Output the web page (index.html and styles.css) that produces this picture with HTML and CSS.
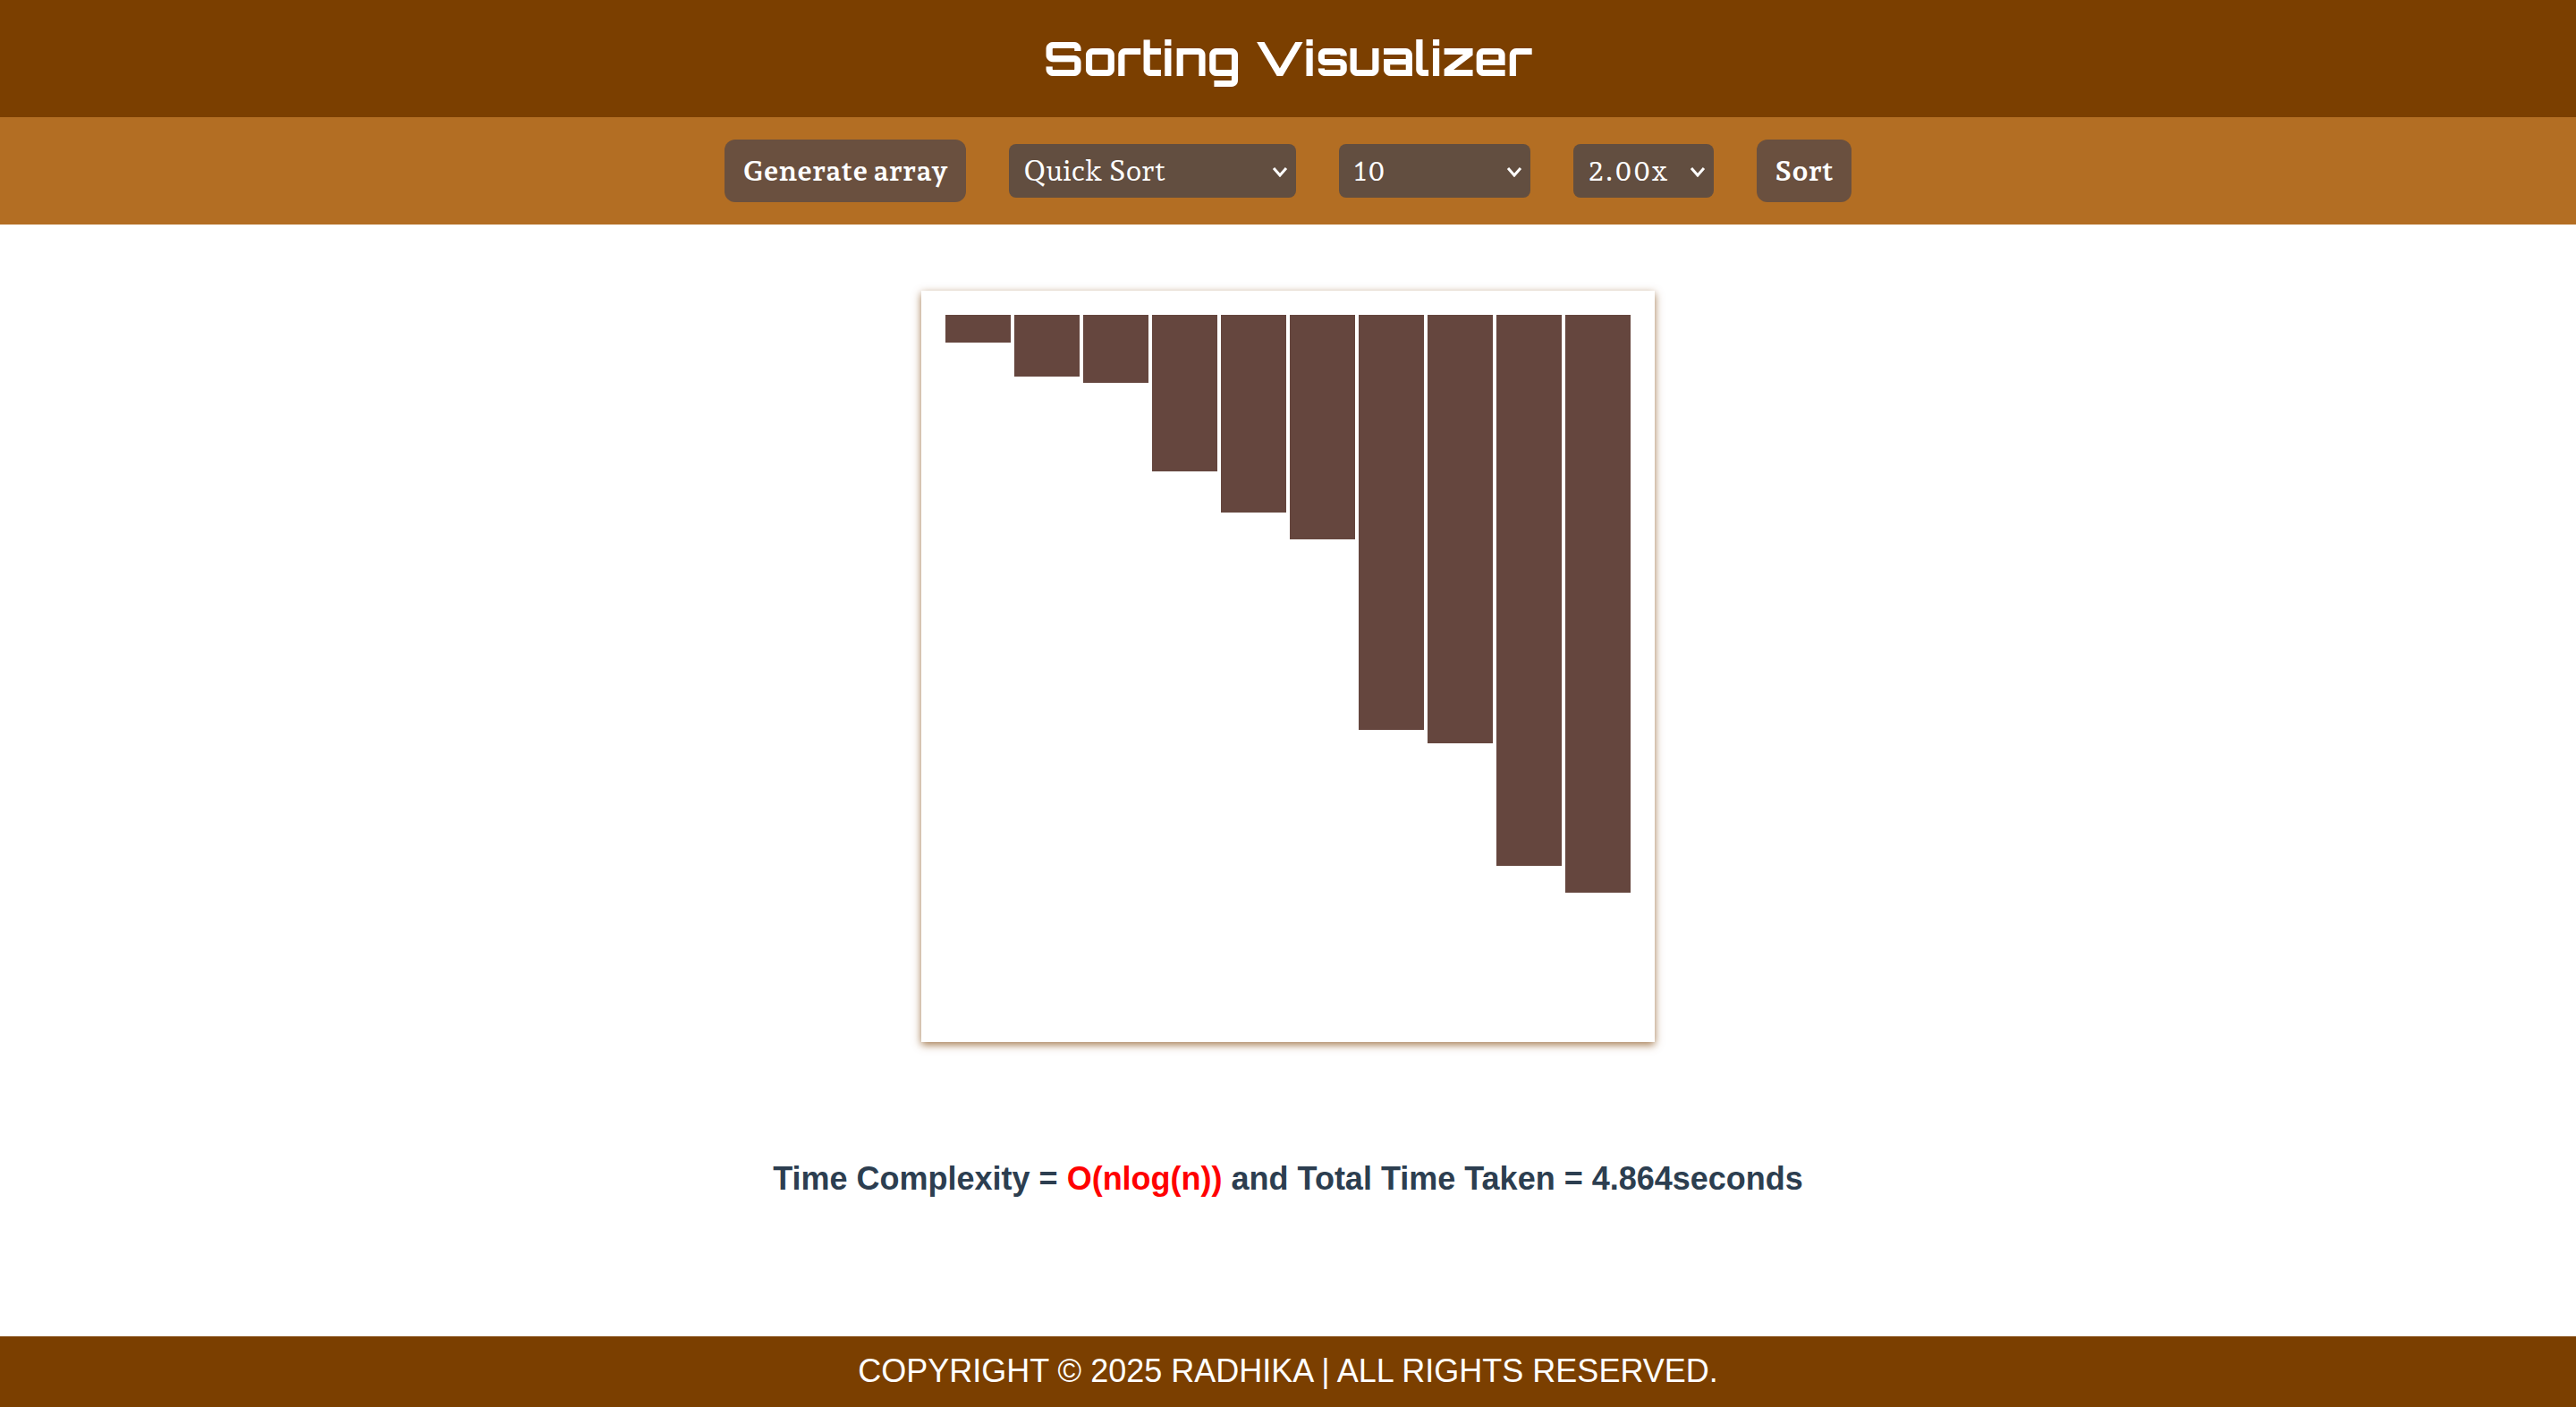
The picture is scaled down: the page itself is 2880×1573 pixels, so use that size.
FILE: index.html
```html
<!DOCTYPE html>
<html lang="en">
<head>
<meta charset="utf-8">
<meta name="viewport" content="width=device-width, initial-scale=1">
<title>Sorting Visualizer</title>
<link rel="stylesheet" href="styles.css">
</head>
<body>
<header class="header"><h1 class="title">Sorting Visualizer</h1></header>
<nav class="controls">
  <button class="button" type="button">Generate array</button>
  <div class="picker picker-algo">
    <select class="select" aria-label="Algorithm"><option>Quick Sort</option></select>
    <svg class="chevron" viewBox="0 0 18 12" aria-hidden="true"><path d="M2 2l7 8 7-8"/></svg>
  </div>
  <div class="picker picker-size">
    <select class="select" aria-label="Array size"><option>10</option></select>
    <svg class="chevron" viewBox="0 0 18 12" aria-hidden="true"><path d="M2 2l7 8 7-8"/></svg>
  </div>
  <div class="picker picker-speed">
    <select class="select" aria-label="Speed"><option>2.00x</option></select>
    <svg class="chevron" viewBox="0 0 18 12" aria-hidden="true"><path d="M2 2l7 8 7-8"/></svg>
  </div>
  <button class="button" type="button">Sort</button>
</nav>
<main class="main">
  <div class="array">
    <div class="bar" style="height:31px"></div>
    <div class="bar" style="height:69px"></div>
    <div class="bar" style="height:76px"></div>
    <div class="bar" style="height:175px"></div>
    <div class="bar" style="height:221px"></div>
    <div class="bar" style="height:251px"></div>
    <div class="bar" style="height:464px"></div>
    <div class="bar" style="height:479px"></div>
    <div class="bar" style="height:616px"></div>
    <div class="bar" style="height:646px"></div>
  </div>
  <p class="result">Time Complexity = <span class="complexity">O(nlog(n))</span> and Total Time Taken = 4.864seconds</p>
</main>
<footer class="footer">COPYRIGHT © 2025 RADHIKA | ALL RIGHTS RESERVED.</footer>
</body>
</html>
```
FILE: styles.css
```css
* { box-sizing: border-box; }

body {
  margin: 0;
  min-height: 100vh;
  display: flex;
  flex-direction: column;
  background: #fff;
  font-family: "Liberation Sans", Arial, sans-serif;
  font-size: 36px;
  line-height: 40px;
}

.header {
  padding: 32px 24px 35px;
  background: #7b3f00;
  color: #fff;
  text-align: center;
}

.title {
  margin: 0;
  font-family: Orbitron, "DejaVu Sans", sans-serif;
  font-size: 54px;
  font-weight: 700;
  line-height: 64px;
}

.controls {
  display: flex;
  flex-wrap: wrap;
  align-items: center;
  justify-content: center;
  gap: 24px 48px;
  padding: 25px;
  background: #b36e23;
}

.button,
.select {
  border: 0;
  color: #fff;
  font-family: "Andada Pro", "Liberation Serif", serif;
  font-size: 32px;
  line-height: 40px;
}

.button {
  padding: 15px 20px;
  border-radius: 12px;
  background: #6a503f;
  font-weight: 700;
}

.picker { position: relative; }
.picker-algo { width: 321px; }
.picker-size { width: 214px; }
.picker-speed { width: 157px; }

.select {
  display: block;
  width: 100%;
  height: 60px;
  padding: 0 40px 0 16px;
  border-radius: 8px;
  background: #624e40;
  appearance: none;
}

.chevron {
  position: absolute;
  top: 25px;
  right: 9px;
  width: 18px;
  height: 12px;
  fill: none;
  stroke: #fff;
  stroke-width: 3;
  pointer-events: none;
}

.main {
  flex: 1;
  display: flex;
  flex-direction: column;
  align-items: center;
  padding: 74px 24px;
}

.array {
  display: flex;
  align-items: flex-start;
  gap: 4px;
  min-height: 840px;
  padding: 27px;
  box-shadow: 0 3px 9px rgba(123, 63, 0, 0.7);
}

.bar {
  width: 73px;
  background: #65463e;
}

.result {
  margin: 133px 0 0;
  color: #2c3e50;
  font-weight: 700;
  text-align: center;
}

.complexity { color: #f00; }

.footer {
  padding: 19px 24px 20px;
  background: #7b3f00;
  color: #fff;
  text-align: center;
}
```
